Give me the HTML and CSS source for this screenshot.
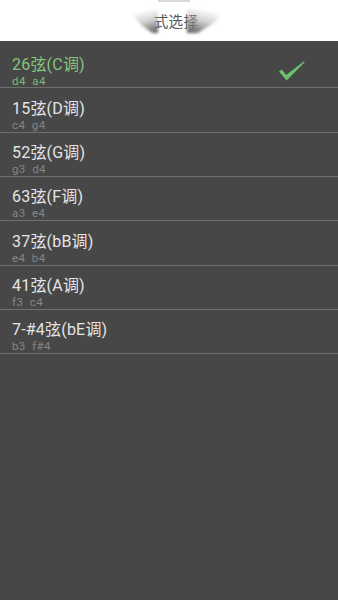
FILE: index.html
```html
<!DOCTYPE html>
<html lang="zh">
<head>
<meta charset="utf-8">
<link rel="stylesheet" href="styles.css">
</head>
<body>
<div class="header">
  <div class="topline"></div>
  <div class="title">式选择</div>
  <div class="shade shade-left"><div class="shape"></div></div>
  <div class="shade shade-right"><div class="shape"></div></div>
</div>
<div class="list">
  <div class="row selected">
    <div class="text">
      <div class="name">26弦(C调)</div>
      <div class="notes">d4&nbsp;&nbsp;a4</div>
    </div>
    <svg class="check" width="26" height="20" viewBox="0 0 26 20"><path d="M0 10.5 L2.8 8.6 L7.2 14 L25 0.3 L25.6 1.2 L7.6 19.5 Z" fill="#6cc46a"/></svg>
  </div>
  <div class="row"><div class="text"><div class="name">15弦(D调)</div><div class="notes">c4&nbsp;&nbsp;g4</div></div></div>
  <div class="row"><div class="text"><div class="name">52弦(G调)</div><div class="notes">g3&nbsp;&nbsp;d4</div></div></div>
  <div class="row"><div class="text"><div class="name">63弦(F调)</div><div class="notes">a3&nbsp;&nbsp;e4</div></div></div>
  <div class="row"><div class="text"><div class="name">37弦(bB调)</div><div class="notes">e4&nbsp;&nbsp;b4</div></div></div>
  <div class="row"><div class="text"><div class="name">41弦(A调)</div><div class="notes">f3&nbsp;&nbsp;c4</div></div></div>
  <div class="row"><div class="text"><div class="name">7-#4弦(bE调)</div><div class="notes">b3&nbsp;&nbsp;f#4</div></div></div>
</div>
</body>
</html>
```
FILE: styles.css
```css
html, body {
  margin: 0;
  padding: 0;
  height: 100%;
}
body {
  background: #474747;
  font-family: Roboto, "Noto Sans CJK SC", sans-serif;
  overflow: hidden;
}
.header {
  position: relative;
  height: 41px;
  background: #ffffff;
  display: flex;
  justify-content: center;
  align-items: flex-start;
  overflow: hidden;
}
.topline {
  position: absolute;
  left: 158px;
  top: 0;
  width: 32px;
  height: 1.5px;
  background: #d9d9d9;
}
.title {
  margin-top: 13px;
  margin-left: 14px;
  font-size: 14.5px;
  line-height: 20px;
  color: #555;
  letter-spacing: 0.3px;
}
.shade {
  position: absolute;
  top: 9px;
  height: 26px;
  filter: blur(1.6px);
}
.shade .shape {
  width: 100%;
  height: 100%;
}
.shade-left {
  left: 130px;
  width: 28px;
}
.shade-left .shape {
  background: linear-gradient(165deg, rgba(255,255,255,0) 15%, rgba(170,170,170,0.55) 50%, rgba(85,85,85,0.95) 92%);
  clip-path: polygon(0 10%, 100% 0, 100% 92%, 80% 92%, 40% 62%);
}
.shade-right {
  left: 187px;
  width: 38px;
}
.shade-right .shape {
  background: linear-gradient(195deg, rgba(255,255,255,0) 15%, rgba(170,170,170,0.55) 50%, rgba(85,85,85,0.95) 92%);
  clip-path: polygon(0 0, 100% 8%, 72% 52%, 28% 92%, 0 92%);
}
.list {
  padding-top: 3px;
}
.row {
  box-sizing: border-box;
  height: 44.33px;
  border-bottom: 1px solid #6f6f6f;
  padding: 10.5px 0 0 12px;
  display: flex;
  justify-content: space-between;
  align-items: flex-start;
}
.name {
  font-size: 16px;
  line-height: 19px;
  color: #e4e4e4;
  letter-spacing: 0.2px;
}
.notes {
  margin-top: 1px;
  font-size: 11.5px;
  line-height: 13px;
  color: #858585;
  letter-spacing: 0.4px;
}
.selected .name { color: #84c57a; }
.selected .notes { color: #78bd6e; }
.check {
  margin-top: 6.5px;
  margin-right: 33px;
}
```
